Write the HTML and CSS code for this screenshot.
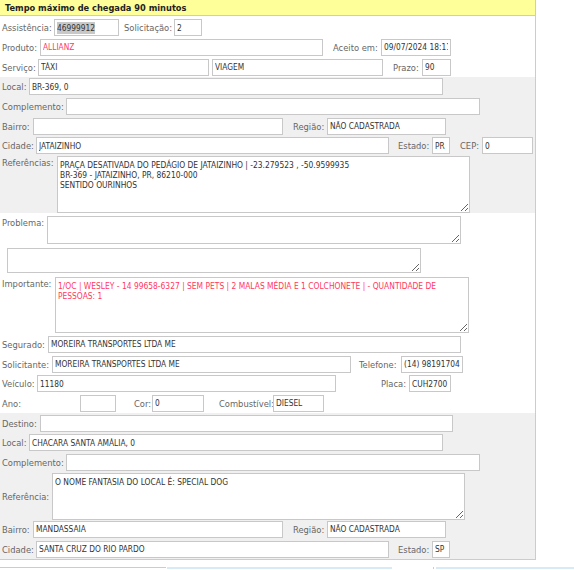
FILE: index.html
```html
<!DOCTYPE html>
<html lang="pt-BR">
<head>
<meta charset="utf-8">
<title>Atendimento</title>
<link rel="stylesheet" href="styles.css">
</head>
<body>
<div class="panel">
  <div class="title">Tempo máximo de chegada 90 minutos</div>

  <div class="sec sec-top">
    <div class="row">
      <label class="lw52">Assistência:</label>
      <div class="field w65"><span class="sel">46999912</span></div>
      <label class="ml5 lw50">Solicitação:</label>
      <input class="w28" readonly value="2">
    </div>
    <div class="row">
      <label class="lw38">Produto:</label>
      <input class="w283 red" readonly value="ALLIANZ">
      <label class="ml10 lw48">Aceito em:</label>
      <input class="w70" readonly value="09/07/2024 18:11">
    </div>
    <div class="row">
      <label class="lw36">Serviço:</label>
      <input class="w171" readonly value="TÁXI">
      <input class="ml3 w171" readonly value="VIAGEM">
      <label class="ml10 lw29">Prazo:</label>
      <input class="w29" readonly value="90">
    </div>
  </div>

  <div class="sec grey">
    <div class="row">
      <label class="lw27">Local:</label>
      <input class="w414" readonly value="BR-369, 0">
    </div>
    <div class="row">
      <label class="lw64">Complemento:</label>
      <input class="w414" readonly value="">
    </div>
    <div class="row">
      <label class="lw31">Bairro:</label>
      <input class="w250" readonly value="">
      <label class="ml10 lw34">Região:</label>
      <input class="w119" readonly value="NÃO CADASTRADA">
    </div>
    <div class="row">
      <label class="lw34">Cidade:</label>
      <input class="w353" readonly value="JATAIZINHO">
      <label class="ml9 lw34">Estado:</label>
      <input class="w18" readonly value="PR">
      <label class="ml10 lw22">CEP:</label>
      <input class="w51" readonly value="0">
    </div>
    <div class="trow">
      <label class="lw55 ltop">Referências:</label>
      <textarea class="w413 h57" readonly>PRAÇA DESATIVADA DO PEDÁGIO DE JATAIZINHO | -23.279523 , -50.9599935
BR-369 - JATAIZINHO, PR, 86210-000
SENTIDO OURINHOS</textarea>
    </div>
  </div>

  <div class="sec">
    <div class="trow mt3">
      <label class="lw45 ltop">Problema:</label>
      <textarea class="w414 h28" readonly></textarea>
    </div>
    <div class="trow mt4 pl7">
      <textarea class="w414 h25" readonly></textarea>
    </div>
    <div class="trow mt4">
      <label class="lw53 ltop">Importante:</label>
      <textarea class="w414 h56 red" readonly>1/OC | WESLEY - 14 99658-6327 | SEM PETS | 2 MALAS MÉDIA E 1 COLCHONETE | - QUANTIDADE DE PESSOAS: 1</textarea>
    </div>
    <div class="row mt2">
      <label class="lw46">Segurado:</label>
      <input class="w413" readonly value="MOREIRA TRANSPORTES LTDA ME">
    </div>
    <div class="row">
      <label class="lw50">Solicitante:</label>
      <input class="w299" readonly value="MOREIRA TRANSPORTES LTDA ME">
      <label class="ml8 lw42">Telefone:</label>
      <input class="w62" readonly value="(14) 981917048">
    </div>
    <div class="row">
      <label class="lw35">Veículo:</label>
      <input class="w299" readonly value="11180">
      <label class="ml45 lw28">Placa:</label>
      <input class="w42" readonly value="CUH2700">
    </div>
    <div class="row">
      <label class="lw78">Ano:</label>
      <input class="w36" readonly value="">
      <label class="ml18 lw18">Cor:</label>
      <input class="w52" readonly value="0">
      <label class="ml15 lw54">Combustível:</label>
      <input class="w51" readonly value="DIESEL">
    </div>
  </div>

  <div class="sec grey">
    <div class="row">
      <label class="lw38">Destino:</label>
      <input class="w413" readonly value="">
    </div>
    <div class="row">
      <label class="lw27">Local:</label>
      <input class="w414" readonly value="CHACARA SANTA AMÁLIA, 0">
    </div>
    <div class="row">
      <label class="lw64">Complemento:</label>
      <input class="w414" readonly value="">
    </div>
    <div class="trow mid">
      <label class="lw50">Referência:</label>
      <textarea class="w413 h47" readonly>O NOME FANTASIA DO LOCAL É: SPECIAL DOG</textarea>
    </div>
    <div class="row">
      <label class="lw31">Bairro:</label>
      <input class="w250" readonly value="MANDASSAIA">
      <label class="ml10 lw34">Região:</label>
      <input class="w119" readonly value="NÃO CADASTRADA">
    </div>
    <div class="row">
      <label class="lw34">Cidade:</label>
      <input class="w353" readonly value="SANTA CRUZ DO RIO PARDO">
      <label class="ml9 lw34">Estado:</label>
      <input class="w18" readonly value="SP">
    </div>
  </div>
</div>

<div class="footer">
  <div class="f-grey"></div>
  <div class="f-blue f-b1"></div>
  <div class="f-gap"></div>
  <div class="f-blue f-b2"></div>
</div>
</body>
</html>
```

FILE: styles.css
```css
html, body {
  margin: 0;
  padding: 0;
  background: #ffffff;
  overflow: hidden;
}

body {
  font-family: "DejaVu Sans Condensed", "DejaVu Sans", sans-serif;
  font-stretch: condensed;
  color: #333333;
}

.panel {
  width: 536px;
  box-sizing: border-box;
  border-right: 1px solid #cccccc;
  border-bottom: 1px solid #cccccc;
}

.title {
  height: 15px;
  line-height: 15px;
  background: #ffff99;
  border-bottom: 1px solid #cccccc;
  padding-left: 5px;
  font-weight: bold;
  font-size: 9.2px;
  color: #222222;
  white-space: nowrap;
}

.sec-top {
  padding-top: 2px;
}

.grey {
  background: #f0f0f0;
}

.row {
  display: flex;
  align-items: center;
  height: 19.67px;
  padding-left: 2px;
}

.trow {
  display: flex;
  align-items: flex-start;
  padding-left: 2px;
}

.trow.mid {
  align-items: center;
  margin-top: 0.33px;
}

label {
  font-size: 9.3px;
  color: #666666;
  white-space: nowrap;
  flex: none;
  line-height: 11px;
}

.ltop {
  padding-top: 1px;
}

input, .field, textarea {
  box-sizing: border-box;
  flex: none;
  height: 17px;
  border: 1px solid #c8c8c8;
  background: #ffffff;
  font-family: "DejaVu Sans Condensed", "DejaVu Sans", sans-serif;
  font-stretch: condensed;
  font-size: 8.3px;
  color: #333333;
  padding: 0 2px;
  margin: 0;
  outline: none;
  border-radius: 0;
}

.field {
  display: flex;
  align-items: center;
  overflow: hidden;
  white-space: nowrap;
}

.sel {
  background: #c8c8c8;
  line-height: 12px;
}

textarea {
  padding: 3px 2px;
  line-height: 10px;
  font-size: 8.4px;
  resize: both;
  overflow: hidden;
}

.red {
  color: #ff3860;
}

.mt2 { margin-top: 2px; }
.mt3 { margin-top: 3px; }
.mt4 { margin-top: 4px; }
.pl7 { padding-left: 7px; }

.ml3 { margin-left: 3px; }
.ml5 { margin-left: 5px; }
.ml8 { margin-left: 8px; }
.ml9 { margin-left: 9px; }
.ml10 { margin-left: 10px; }
.ml15 { margin-left: 15px; }
.ml18 { margin-left: 18px; }
.ml45 { margin-left: 45px; }

.lw18 { width: 18px; }
.lw22 { width: 22px; }
.lw27 { width: 27px; }
.lw28 { width: 28px; }
.lw29 { width: 29px; }
.lw31 { width: 31px; }
.lw34 { width: 34px; }
.lw35 { width: 35px; }
.lw36 { width: 36px; }
.lw38 { width: 38px; }
.lw42 { width: 42px; }
.lw45 { width: 45px; }
.lw46 { width: 46px; }
.lw48 { width: 48px; }
.lw50 { width: 50px; }
.lw52 { width: 52px; }
.lw53 { width: 53px; }
.lw54 { width: 54px; }
.lw55 { width: 55px; }
.lw64 { width: 64px; }
.lw78 { width: 78px; }

.w18 { width: 18px; }
.w28 { width: 28px; }
.w29 { width: 29px; }
.w36 { width: 36px; }
.w42 { width: 42px; }
.w51 { width: 51px; }
.w52 { width: 52px; }
.w62 { width: 62px; }
.w65 { width: 65px; }
.w70 { width: 70px; }
.w119 { width: 119px; }
.w171 { width: 171px; }
.w250 { width: 250px; }
.w283 { width: 283px; }
.w299 { width: 299px; }
.w353 { width: 353px; }
.w413 { width: 413px; }
.w414 { width: 414px; }

.h25 { height: 25px; }
.h28 { height: 28px; }
.h47 { height: 47px; }
.h56 { height: 56px; }
.h57 { height: 57px; }

.footer {
  display: flex;
  margin-top: 7px;
  height: 2px;
}

.f-grey {
  width: 166px;
  border-top: 1px solid #cccccc;
  margin-right: 1px;
}

.f-blue {
  background: #d6ebf5;
}

.f-b1 { width: 225px; }

.f-gap {
  width: 41px;
  border-right: 1px solid #cccccc;
  margin-right: 2px;
}

.f-b2 { flex: 1; }
```
